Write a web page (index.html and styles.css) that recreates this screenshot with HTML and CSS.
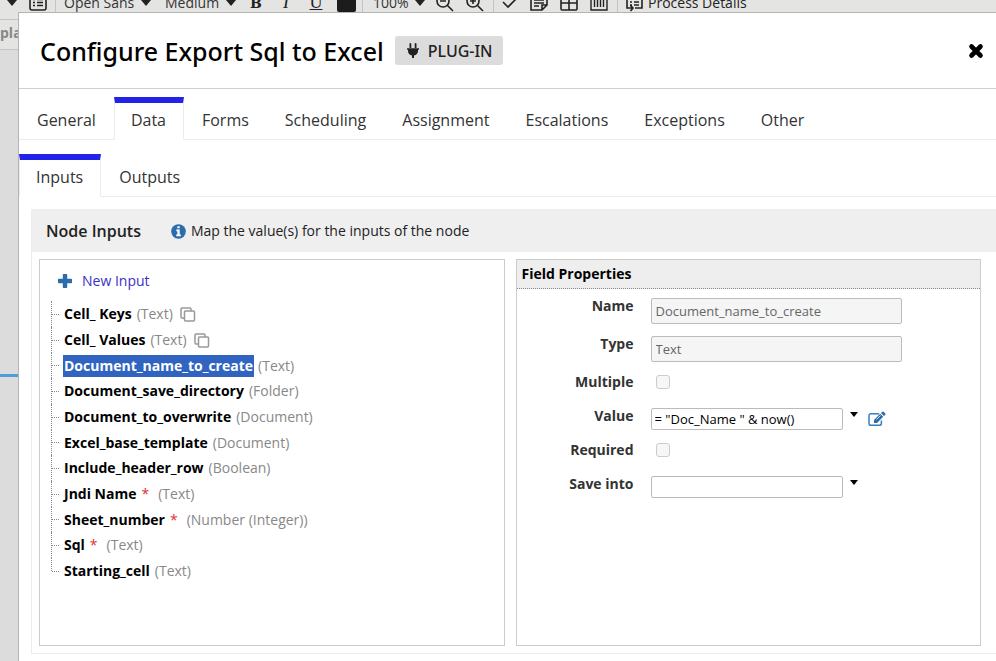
FILE: index.html
```
<!DOCTYPE html>
<html lang="en">
<head>
    <meta charset="UTF-8">
    <meta name="viewport" content="width=device-width, initial-scale=1.0">
    <title>Configure Export Sql to Excel</title>
    <link rel="stylesheet" href="styles.css">
</head>
<body>
    <!-- Modeler toolbar -->
    <div class="toolbar">
        <button class="tool tool-more" aria-label="More"><span class="caret"></span></button>
        <button class="tool tool-list" aria-label="List">
            <svg width="18" height="17" viewBox="0 0 18 17" fill="none" stroke="#222" stroke-width="1.6"><rect x="1" y="1" width="16" height="15" rx="2"/><path d="M4 5.5h2M8 5.5h6M4 8.5h2M8 8.5h6M4 11.5h2M8 11.5h6"/></svg>
        </button>
        <span class="separator"></span>
        <select class="tool-select" aria-label="Font"><option>Open Sans</option></select>
        <span class="caret"></span>
        <select class="tool-select" aria-label="Font size"><option>Medium</option></select>
        <span class="caret"></span>
        <button class="tool tool-letter bold" aria-label="Bold">B</button>
        <button class="tool tool-letter italic" aria-label="Italic">I</button>
        <button class="tool tool-letter underline" aria-label="Underline">U</button>
        <button class="tool swatch" aria-label="Text color"></button>
        <span class="separator"></span>
        <select class="tool-select tool-zoom" aria-label="Zoom"><option>100%</option></select>
        <span class="caret"></span>
        <button class="tool tool-icon" aria-label="Zoom out">
            <svg width="18" height="18" viewBox="0 0 18 18" fill="none" stroke="#222" stroke-width="1.6"><circle cx="7" cy="7" r="6"/><path d="M11.5 11.5L17 17M4 7h6"/></svg>
        </button>
        <button class="tool tool-icon" aria-label="Zoom in">
            <svg width="18" height="18" viewBox="0 0 18 18" fill="none" stroke="#222" stroke-width="1.6"><circle cx="7" cy="7" r="6"/><path d="M11.5 11.5L17 17M4 7h6M7 4v6"/></svg>
        </button>
        <span class="separator"></span>
        <button class="tool tool-icon" aria-label="Validate">
            <svg width="16" height="14" viewBox="0 0 16 14" fill="none" stroke="#222" stroke-width="1.6"><path d="M1 6l5 5L15 2"/></svg>
        </button>
        <button class="tool tool-icon" aria-label="Annotation">
            <svg width="18" height="16" viewBox="0 0 18 16" fill="none" stroke="#222" stroke-width="1.6"><path d="M1 1h16v9l-5 5H1zM17 10h-5v5M4 5h10M4 8h10M4 11h5"/></svg>
        </button>
        <button class="tool tool-icon" aria-label="Grid">
            <svg width="18" height="16" viewBox="0 0 18 16" fill="none" stroke="#222" stroke-width="1.6"><rect x="1" y="1" width="16" height="14" rx="1"/><path d="M9 1v14M1 8h16"/></svg>
        </button>
        <button class="tool tool-icon" aria-label="Swimlanes">
            <svg width="18" height="16" viewBox="0 0 18 16" fill="none" stroke="#222" stroke-width="1.4"><path d="M1 1h16v14H1zM4.500 3v9M7.500 3v9M10.500 3v9M13.500 3v9"/></svg>
        </button>
        <span class="separator"></span>
        <button class="tool tool-details">
            <svg width="17" height="18" viewBox="0 0 17 18" fill="none" stroke="#222" stroke-width="1.6"><path d="M1 9V1h15v13H9M1 8v6h5M4 5h2M8 5h5M4 8h2M8 8h5M4 11h2M8 11h5M4.500 11.500L7 14l-2.500 3"/></svg>
            Process Details
        </button>
    </div>
    <div class="canvas-tab">pla</div>
    <div class="canvas-line"></div>

    <!-- Node configuration dialog -->
    <div class="dialog" role="dialog" aria-labelledby="dialog-title">
        <div class="dialog-header">
            <h1 id="dialog-title">Configure Export Sql to Excel</h1>
            <span class="badge">
                <svg width="12" height="16" viewBox="0 0 12 16" fill="#222"><path d="M2.500 1a.9.9 0 0 1 1.800 0v4H2.500zM7.700 1a.9.9 0 0 1 1.800 0v4H7.700zM0 5.200h12v1.500h-1v1.500c0 2.200-1.700 3.900-4 4.200V15H5v-2.600C2.700 12.100 1 10.400 1 8.200V6.700H0z"/></svg>
                PLUG-IN
            </span>
            <button class="close" aria-label="Close">
                <svg width="16" height="16" viewBox="0 0 16 16" stroke="#000" stroke-width="4.600" stroke-linecap="round"><path d="M3.500 3.500l9 9M12.500 3.500l-9 9"/></svg>
            </button>
        </div>

        <nav class="tabs">
            <a href="#general">General</a>
            <a href="#data" class="active">Data</a>
            <a href="#forms">Forms</a>
            <a href="#scheduling">Scheduling</a>
            <a href="#assignment">Assignment</a>
            <a href="#escalations">Escalations</a>
            <a href="#exceptions">Exceptions</a>
            <a href="#other">Other</a>
        </nav>

        <nav class="tabs">
            <a href="#inputs" class="active">Inputs</a>
            <a href="#outputs">Outputs</a>
        </nav>

        <div class="node-inputs">
            <div class="node-inputs-header">
                <h2>Node Inputs</h2>
                <svg width="15" height="15" viewBox="0 0 15 15"><circle cx="7.500" cy="7.500" r="7.300" fill="#2b6cab"/><path fill="#fff" d="M6.300 2.300h2.400v2H6.300zM5.300 5.600h3.400v5h1.200v1.700H5.200v-1.700h1.200V7.300H5.300z"/></svg>
                <span>Map the value(s) for the inputs of the node</span>
            </div>

            <div class="panels">
                <div class="panel">
                    <a href="#new" class="new-input">
                        <svg width="14" height="14" viewBox="0 0 14 14" fill="#2b6cab"><path d="M5.600 0h2.800q.8 0 .8.800v4h4q.8 0 .8.800v2.800q0 .8-.8.800h-4v4q0 .8-.8.800H5.600q-.8 0-.8-.8v-4h-4Q0 9.200 0 8.400V5.600q0-.8.800-.8h4v-4q0-.8.800-.8z"/></svg>
                        New Input
                    </a>
                    <ul class="tree">
                        <li><b>Cell_ Keys</b> (Text) <svg class="copy" width="16" height="15" viewBox="0 0 16 15" fill="#fff" stroke="#999" stroke-width="1.500"><rect x="1" y="1" width="10" height="10" rx="1"/><rect x="4.500" y="4" width="10" height="10" rx="1"/></svg></li>
                        <li><b>Cell_ Values</b> (Text) <svg class="copy" width="16" height="15" viewBox="0 0 16 15" fill="#fff" stroke="#999" stroke-width="1.500"><rect x="1" y="1" width="10" height="10" rx="1"/><rect x="4.500" y="4" width="10" height="10" rx="1"/></svg></li>
                        <li><b class="selected">Document_name_to_create</b> (Text)</li>
                        <li><b>Document_save_directory</b> (Folder)</li>
                        <li><b>Document_to_overwrite</b> (Document)</li>
                        <li><b>Excel_base_template</b> (Document)</li>
                        <li><b>Include_header_row</b> (Boolean)</li>
                        <li><b>Jndi Name</b> <span class="required">*</span> (Text)</li>
                        <li><b>Sheet_number</b> <span class="required">*</span> (Number (Integer))</li>
                        <li><b>Sql</b> <span class="required">*</span> (Text)</li>
                        <li><b>Starting_cell</b> (Text)</li>
                    </ul>
                </div>

                <div class="panel">
                    <h3>Field Properties</h3>
                    <form class="fields">
                        <div class="field">
                            <label for="name">Name</label>
                            <input type="text" id="name" class="wide" value="Document_name_to_create" disabled>
                        </div>
                        <div class="field">
                            <label for="type">Type</label>
                            <input type="text" id="type" class="wide" value="Text" disabled>
                        </div>
                        <div class="field">
                            <label for="multiple">Multiple</label>
                            <input type="checkbox" id="multiple" disabled>
                        </div>
                        <div class="field">
                            <label for="value">Value</label>
                            <input type="text" id="value" value='= "Doc_Name " &amp; now()'>
                            <button type="button" class="picker" aria-label="Pick value"></button>
                            <button type="button" class="edit" aria-label="Edit expression">
                                <svg width="18" height="16" viewBox="0 0 18 16"><path fill="none" stroke="#3a7fbb" stroke-width="1.500" d="M11 2.700H3.200Q1 2.700 1 4.800v7.400q0 2.100 2.200 2.100h8q2.200 0 2.200-2.100V9.500"/><path fill="#2b6cab" d="M6 12V9l6.200-6.200 3 3L9 12zM13 2l1.300-1.300q.6-.6 1.200 0l1.800 1.800q.6.6 0 1.200L16 5z"/><path stroke="#fff" stroke-width=".8" d="M8.500 8.500L12.500 4.500"/></svg>
                            </button>
                        </div>
                        <div class="field">
                            <label for="required">Required</label>
                            <input type="checkbox" id="required" disabled>
                        </div>
                        <div class="field">
                            <label for="save-into">Save into</label>
                            <input type="text" id="save-into">
                            <button type="button" class="picker" aria-label="Pick variable"></button>
                        </div>
                    </form>
                </div>
            </div>
        </div>
    </div>
</body>
</html>
```

FILE: styles.css
```
* {
    box-sizing: border-box;
}

body {
    margin: 0;
    height: 100vh;
    overflow: hidden;
    background-color: #dcdcdc;
    font-family: "Open Sans", "Noto Sans", sans-serif;
    font-size: 14px;
    color: #222;
}

button {
    padding: 0;
    border: none;
    background: none;
    font-family: inherit;
    color: inherit;
    cursor: pointer;
}

svg {
    display: block;
    flex: none;
}

/* Toolbar, scrolled partly out of view */
.toolbar {
    display: flex;
    align-items: center;
    height: 34px;
    margin-top: -14px;
    padding-left: 7px;
    background-color: #e4e4e3;
    border-bottom: 1px solid #c4c4c4;
    white-space: nowrap;
}

.caret {
    display: block;
    margin: 0 5px 0 6px;
    border: 5px solid transparent;
    border-top: 6px solid #222;
    border-bottom: none;
}

.separator {
    width: 1px;
    height: 20px;
    margin: 0 8px;
    background-color: #c4c4c4;
}

.tool-more .caret {
    margin: 0 12px 0 0;
}

.tool-select {
    appearance: none;
    padding: 0;
    border: none;
    background: none;
    font-family: inherit;
    font-size: 14px;
    color: #333;
}

.tool-select + .caret + .tool-select {
    margin-left: 9px;
}

.tool-letter {
    width: 30px;
    font-family: "Liberation Serif", serif;
    font-size: 18px;
}

.bold {
    font-family: "DejaVu Serif", serif;
    font-size: 14px;
    font-weight: bold;
}

.italic {
    font-style: italic;
}

.underline {
    text-decoration: underline;
}

.swatch {
    width: 19px;
    height: 18px;
    margin-left: 6px;
    border-radius: 2px;
    background-color: #1c1c1c;
}

.swatch + .separator {
    margin: 0 10px 0 6px;
}

.tool-icon {
    margin: 0 6px;
}

.tool-icon + .separator {
    margin-left: 3px;
}

.separator + .tool-icon {
    margin-left: 0;
}

.tool-details {
    display: flex;
    align-items: center;
    gap: 5px;
    font-size: 14px;
}

.canvas-tab {
    width: 30px;
    height: 30px;
    line-height: 26px;
    background-color: #e4e4e3;
    border-bottom: 1px solid #c4c4c4;
    font-weight: 700;
    color: #888;
}

.canvas-line {
    position: absolute;
    top: 374px;
    left: 0;
    width: 18px;
    height: 3px;
    background-color: #4f9fd4;
}

/* Dialog */
.dialog {
    position: absolute;
    top: 12px;
    left: 18px;
    right: 0;
    min-height: 100vh;
    background-color: #fff;
    border-top: 1px solid #b4b4b4;
    border-left: 1px solid #b4b4b4;
}

.dialog-header {
    display: flex;
    align-items: center;
    gap: 11px;
    height: 76px;
    padding: 0 12px 0 21px;
    border-bottom: 1px solid #d0d0d0;
}

h1 {
    margin: 0;
    font-family: "Noto Sans", "Open Sans", sans-serif;
    font-size: 25px;
    font-weight: 500;
    color: #000;
}

.badge {
    display: flex;
    align-items: center;
    gap: 9px;
    height: 29px;
    padding: 0 10px 0 12px;
    border-radius: 3px;
    background-color: #dcdcdc;
    font-family: "Noto Sans", "Open Sans", sans-serif;
    font-size: 16px;
    font-weight: 500;
}

.close {
    margin-left: auto;
}

.tabs {
    display: flex;
    height: 43px;
    margin-top: 8px;
    box-shadow: inset 0 -1px #ebebeb;
}

.tabs + .tabs {
    margin-top: 14px;
}

.tabs a {
    padding: 6px 17px 0;
    border: 1px solid transparent;
    border-top: none;
    font-size: 16px;
    line-height: 34px;
    color: #333;
    text-decoration: none;
}

.tabs .active {
    padding: 0 17px 0 16px;
    border-color: #ebebeb;
    border-top: 6px solid #2322e8;
    border-bottom-color: #fff;
    background-color: #fff;
}

/* Node inputs */
.node-inputs {
    margin: 12px 0 0 12px;
    border: 1px solid #ededed;
    border-right: none;
}

.node-inputs-header {
    display: flex;
    align-items: center;
    gap: 5px;
    height: 42px;
    padding-left: 14px;
    background-color: #efefef;
    line-height: 20px;
}

h2 {
    margin: 0 25px 0 0;
    font-size: 16px;
    font-weight: 600;
}

.panels {
    display: grid;
    grid-template-columns: 1fr 1fr;
    gap: 11px;
    padding: 7px 15px 7px 7px;
}

.panel {
    min-height: 387px;
    border: 1px solid #ccc;
}

.new-input {
    display: flex;
    align-items: center;
    gap: 10px;
    padding: 11px 18px 10px;
    line-height: 20px;
    color: #3a30c8;
    text-decoration: none;
}

.tree {
    margin: 0 0 0 11px;
    padding: 0;
    list-style: none;
    line-height: 22px;
    color: #888;
}

.tree li {
    display: flex;
    align-items: center;
    gap: 4px;
    height: 26px;
    border-left: 1px dotted #888;
}

.tree li:nth-child(3n) {
    height: 25px;
}

.tree li::before {
    content: "";
    width: 7px;
    border-top: 1px dotted #888;
}

/* The trunk stops at the last branch */
.tree li:last-child {
    position: relative;
    border-left-color: transparent;
}

.tree li:last-child::after {
    content: "";
    position: absolute;
    top: 0;
    left: -1px;
    height: 50%;
    border-left: 1px dotted #888;
}

.tree b {
    padding: 0 1px;
    font-weight: 700;
    color: #000;
}

.tree .selected {
    background-color: #3064c0;
    color: #fff;
}

.copy {
    margin-left: 3px;
}

.required {
    margin-right: 5px;
    color: #e03030;
}

h3 {
    margin: 0;
    padding: 0 5px;
    border-bottom: 1px dotted #888;
    background-color: #eee;
    font-size: 14px;
    font-weight: 700;
    line-height: 28px;
    color: #000;
}

.fields {
    display: grid;
    gap: 12px;
    padding: 9px 0;
}

.field {
    display: flex;
    min-height: 22px;
}

.field label {
    width: 117px;
    margin-right: 17px;
    font-weight: 700;
    line-height: 16px;
    text-align: right;
    color: #333;
}

input[type="text"] {
    width: 192px;
    height: 22px;
    padding: 0 3px;
    border: 1px solid #bbb;
    border-radius: 2px;
    background-color: #fff;
    font-family: inherit;
    font-size: 13px;
    color: #000;
}

input[type="text"].wide {
    width: 251px;
    height: 26px;
    padding: 0 4px;
    background-color: #f5f5f5;
    color: #666;
}

input[type="checkbox"] {
    appearance: none;
    width: 14px;
    height: 14px;
    margin: 1px 5px;
    border: 1px solid #ccc;
    border-radius: 3px;
    background-color: #f7f7f7;
}

.picker {
    align-self: flex-start;
    margin: 4px 10px 0 7px;
    border: 4px solid transparent;
    border-top: 5px solid #000;
    border-bottom: none;
}

.edit {
    align-self: center;
}
```
